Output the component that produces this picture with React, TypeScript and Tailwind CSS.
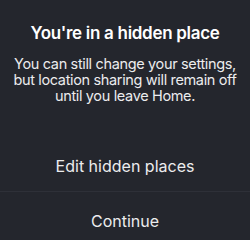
export default function App() {
  return (
    <div
      className="flex h-[240px] w-[250px] flex-col overflow-hidden bg-[#24262d] text-white"
      style={{ fontFamily: "Inter, 'Noto Sans', sans-serif" }}
    >
      <div className="px-[8px] pt-[22px] text-center">
        <h1 className="text-[17px] font-semibold leading-[22px] tracking-[-0.3px]">
          You're in a hidden place
        </h1>
        <p className="mt-[12px] text-[14.5px] leading-[16px] tracking-[-0.35px] text-[#ececee]">
          You can still change your settings, but location sharing will remain off until you leave Home.
        </p>
      </div>
      <div className="flex-1" />
      <button className="flex h-[50px] shrink-0 items-center justify-center text-[16px] text-[#ececee]">
        Edit hidden places
      </button>
      <div className="h-px shrink-0 bg-[#2e3038]" />
      <button className="flex h-[48px] shrink-0 items-start justify-center pt-[17px] text-[16px] text-[#ececee]">
        Continue
      </button>
    </div>
  )
}
